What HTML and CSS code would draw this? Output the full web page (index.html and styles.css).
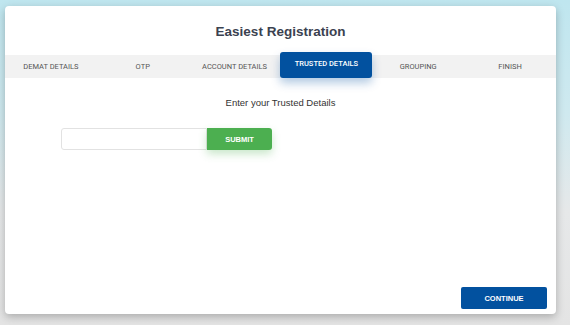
FILE: index.html
```html
<!DOCTYPE html>
<html>
	<head>
		<link rel="stylesheet" href="styles.css">
		<title>Easiest Registration</title>
	</head>
	<body>
		<div class="modal">
			<h1 class="modal-title">Easiest Registration</h1>
			<div class="steps">
				<div class="step">DEMAT DETAILS</div>
				<div class="step">OTP</div>
				<div class="step">ACCOUNT DETAILS</div>
				<div class="step step-active">TRUSTED DETAILS</div>
				<div class="step">GROUPING</div>
				<div class="step">FINISH</div>
			</div>
			<p class="prompt">Enter your Trusted Details</p>
			<div class="entry">
				<input type="text" class="entry-input">
				<button class="button-submit">SUBMIT</button>
			</div>
			<div class="footer">
				<button class="button-continue">CONTINUE</button>
			</div>
		</div>
	</body>
</html>
```

FILE: styles.css
```css
html, body {
	margin: 0;
	height: 100%;
}
body {
	background: linear-gradient(to bottom, #bfe6ef 0%, #cfe9ef 35%, #e6e8e9 65%, #e4e4e4 100%);
	padding: 6px 0 0 5px;
	box-sizing: border-box;
	font-family: "Liberation Sans", Arial, sans-serif;
}
.modal {
	width: 551px;
	height: 308px;
	background-color: white;
	border-radius: 4px;
	box-shadow: 0 3px 8px rgba(0, 0, 0, 0.25);
	display: flex;
	flex-direction: column;
}
.modal-title {
	margin: 0;
	height: 49px;
	line-height: 52px;
	text-align: center;
	font-size: 13.5px;
	font-weight: bold;
	color: #3b4250;
}
.steps {
	display: flex;
	height: 23px;
	background-color: #f2f2f2;
}
.step {
	flex: 1;
	text-align: center;
	line-height: 23px;
	font-family: Roboto, "Liberation Sans", sans-serif;
	font-size: 7.5px;
	color: #555;
}
.step-active {
	margin-top: -3px;
	height: 26px;
	line-height: 24px;
	background-color: #02519f;
	color: white;
	font-weight: 500;
	border-radius: 3px;
	box-shadow: 0 5px 10px rgba(2, 81, 159, 0.3);
}
.prompt {
	margin: 19px 0 0;
	text-align: center;
	font-size: 9.5px;
	color: #333;
}
.entry {
	display: flex;
	margin: 20px 0 0 56px;
}
.entry-input {
	width: 146px;
	height: 22px;
	box-sizing: border-box;
	border: 1px solid #e2e2e2;
	border-radius: 3px 0 0 3px;
	margin: 0;
}
.button-submit {
	width: 65px;
	height: 22px;
	border: none;
	border-radius: 0 3px 3px 0;
	background-color: #4caf50;
	color: white;
	font-family: "Liberation Sans", Arial, sans-serif;
	font-size: 7.5px;
	font-weight: bold;
	box-shadow: 0 4px 8px rgba(76, 175, 80, 0.3);
}
.footer {
	margin-top: auto;
	display: flex;
	justify-content: flex-end;
	padding: 0 9px 5px 0;
}
.button-continue {
	width: 86px;
	height: 22px;
	border: none;
	border-radius: 2px;
	background-color: #02519f;
	color: white;
	font-family: "Liberation Sans", Arial, sans-serif;
	font-size: 7.5px;
	font-weight: bold;
}
```
